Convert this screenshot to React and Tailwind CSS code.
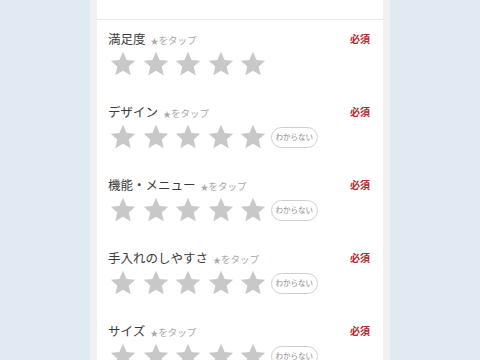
import React from "react";

const Star = () => (
  <svg width="28" height="28" viewBox="0 0 24 24" className="shrink-0">
    <path
      d="M12 1.6l3.1 6.9 7.4.7-5.6 5 1.7 7.4L12 17.8l-6.6 3.8 1.7-7.4-5.6-5 7.4-.7z"
      fill="#c8c8c8"
    />
  </svg>
);

const rows = [
  { title: "満足度", unknown: false },
  { title: "デザイン", unknown: true },
  { title: "機能・メニュー", unknown: true },
  { title: "手入れのしやすさ", unknown: true },
  { title: "サイズ", unknown: true },
];

export default function App() {
  return (
    <div
      className="flex justify-center h-[360px] overflow-hidden bg-[#e1e9f2]"
      style={{ fontFamily: '"Noto Sans CJK JP", "Noto Sans", sans-serif' }}
    >
      <div className="w-[300px] bg-[#f1f1f1] px-[7px]">
        <div className="bg-white h-full">
          <div className="h-[20px] border-b border-[#e9e9e9]" />
          {rows.map((r) => (
            <div key={r.title} className="h-[73px] pt-[10px] pl-[11px] pr-[13px]">
              <div className="flex items-center justify-between h-[18px]">
                <div className="flex items-baseline">
                  <span className="text-[12.5px] text-[#3a3a3a] leading-none">{r.title}</span>
                  <span className="ml-[5px] text-[9.5px] text-[#a8a8a8] leading-none">
                    <span className="text-[8px]">★</span>をタップ
                  </span>
                </div>
                <span className="text-[10px] font-bold text-[#b3262d] leading-none">必須</span>
              </div>
              <div className="flex items-center mt-[2px] gap-[4.5px] ml-[1px]">
                <Star />
                <Star />
                <Star />
                <Star />
                <Star />
                {r.unknown && (
                  <div className="-ml-[1px] h-[21px] px-[4px] flex items-center rounded-full border border-[#cfcfcf] text-[7.5px] text-[#888] leading-none">
                    わからない
                  </div>
                )}
              </div>
            </div>
          ))}
        </div>
      </div>
    </div>
  );
}
